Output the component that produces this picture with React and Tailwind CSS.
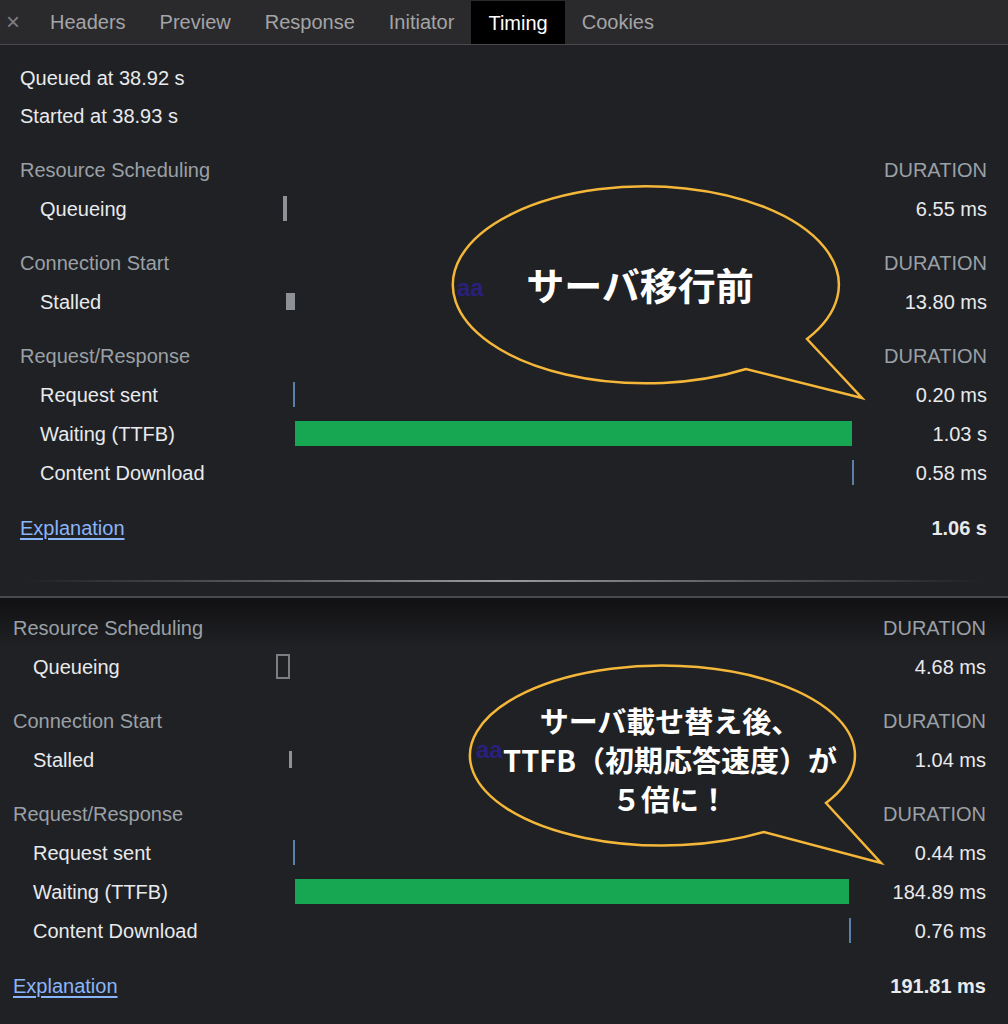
import React from "react";

const GRAY = "#8e9196";
const BLUE = "#5b7fa6";
const GREEN = "#17a652";

const top = [
  {
    title: "Resource Scheduling",
    rows: [{ label: "Queueing", value: "6.55 ms", bar: { left: 0, width: 4, height: 25, color: GRAY } }],
  },
  {
    title: "Connection Start",
    rows: [{ label: "Stalled", value: "13.80 ms", bar: { left: 3, width: 9, height: 17, color: GRAY } }],
  },
  {
    title: "Request/Response",
    rows: [
      { label: "Request sent", value: "0.20 ms", bar: { left: 10, width: 2, height: 25, color: BLUE } },
      { label: "Waiting (TTFB)", value: "1.03 s", bar: { left: 12, width: 557, height: 25, color: GREEN } },
      { label: "Content Download", value: "0.58 ms", bar: { left: 569, width: 2, height: 25, color: BLUE } },
    ],
  },
];

const bottom = [
  {
    title: "Resource Scheduling",
    rows: [{ label: "Queueing", value: "4.68 ms", bar: { left: 0, width: 14, height: 25, outline: "#7a7d82" } }],
  },
  {
    title: "Connection Start",
    rows: [{ label: "Stalled", value: "1.04 ms", bar: { left: 13, width: 3, height: 17, color: GRAY } }],
  },
  {
    title: "Request/Response",
    rows: [
      { label: "Request sent", value: "0.44 ms", bar: { left: 17, width: 2, height: 25, color: BLUE } },
      { label: "Waiting (TTFB)", value: "184.89 ms", bar: { left: 19, width: 554, height: 25, color: GREEN } },
      { label: "Content Download", value: "0.76 ms", bar: { left: 573, width: 2, height: 25, color: BLUE } },
    ],
  },
];

function Bar({ bar }) {
  const style = {
    marginLeft: bar.left,
    width: bar.width,
    height: bar.height,
    background: bar.outline ? "transparent" : bar.color,
    border: bar.outline ? `2px solid ${bar.outline}` : undefined,
  };
  return <div className="shrink-0" style={style} />;
}

function Groups({ groups }) {
  return groups.map((g) => (
    <div key={g.title} className="mt-[15px]">
      <div className="flex h-[39px] items-center">
        <div className="flex-1 text-[#9aa0a6]">{g.title}</div>
        <div className="text-[#9aa0a6]">DURATION</div>
      </div>
      {g.rows.map((r) => (
        <div key={r.label} className="flex h-[39px] items-center">
          <div className="w-[263px] shrink-0 pl-[20px] text-[#e8eaed]">{r.label}</div>
          <div className="flex flex-1 items-center">
            <Bar bar={r.bar} />
          </div>
          <div className="w-[130px] shrink-0 text-right text-[#e8eaed]">{r.value}</div>
        </div>
      ))}
    </div>
  ));
}

function Explanation({ total }) {
  return (
    <div className="mt-[16px] flex h-[39px] items-center">
      <a className="flex-1 text-[#8ab4f8] underline underline-offset-[3px]">Explanation</a>
      <div className="font-bold text-[#e8eaed]">{total}</div>
    </div>
  );
}

export default function App() {
  const tabs = ["Headers", "Preview", "Response", "Initiator", "Timing", "Cookies"];
  return (
    <div
      className="relative h-[1024px] w-[1008px] overflow-hidden bg-[#202124] text-[20px]"
      style={{ fontFamily: '"Liberation Sans", Arial, sans-serif' }}
    >
      {/* tab bar */}
      <div className="flex h-[45px] items-stretch border-b border-[#4a4a4c] bg-[#2a2a2c]">
        <div className="flex w-[33px] items-center pl-[6px] text-[24px] font-light text-[#7d7d80]">×</div>
        {tabs.map((t) => (
          <div
            key={t}
            className={
              t === "Timing"
                ? "mt-[1px] flex items-center bg-black px-[17px] text-white"
                : "flex items-center px-[17px] text-[#a4a4a7]"
            }
          >
            {t}
          </div>
        ))}
      </div>

      {/* top panel */}
      <div className="pl-[20px] pr-[21px] pt-[14px]">
        <div className="flex h-[38px] items-center text-[#e8eaed]">Queued at 38.92 s</div>
        <div className="flex h-[38px] items-center text-[#e8eaed]">Started at 38.93 s</div>
        <Groups groups={top} />
        <Explanation total="1.06 s" />
      </div>
      <div className="mx-[25px] mt-[33px] h-[2px] bg-[linear-gradient(to_right,transparent,#5a5a5e_25%,#9a9a9e_50%,#5a5a5e_75%,transparent)]" />
      <div className="mt-[14px] h-[2px] bg-[#4a4a4e]" />

      {/* bottom panel */}
      <div className="h-[500px] bg-[linear-gradient(to_bottom,#111113,#202124_50px)] pl-[13px] pr-[22px] pt-[10px]">
        <div className="-mt-[15px]">
          <Groups groups={bottom} />
        </div>
        <Explanation total="191.81 ms" />
      </div>

      {/* overlays */}
      <span className="absolute left-[457px] top-[275px] text-[24px] font-bold leading-[26px] text-[#2a1f7d]">aa</span>
      <span className="absolute left-[476px] top-[737px] text-[24px] font-bold leading-[26px] text-[#2a1f7d]">aa</span>

      <svg className="pointer-events-none absolute left-0 top-0" width="1008" height="1024" viewBox="0 0 1008 1024">
        <path
          d="M 746 369 A 193 98.5 0 1 1 807 339 L 862 398 Z"
          fill="none"
          stroke="#f4b73a"
          strokeWidth="2.5"
          strokeLinejoin="miter"
        />
        <path
          d="M 764 832 A 192.5 90 0 1 1 826 803 L 881 863 Z"
          fill="none"
          stroke="#f4b73a"
          strokeWidth="2.5"
          strokeLinejoin="miter"
        />
      </svg>

      <div
        className="absolute left-[640px] top-[284px] -translate-x-1/2 -translate-y-1/2 whitespace-nowrap text-[38px] font-bold leading-none text-white"
        style={{ fontFamily: '"Noto Sans CJK JP", sans-serif' }}
      >
        サーバ移行前
      </div>
      <div
        className="absolute left-[670px] top-[759px] -translate-x-1/2 -translate-y-1/2 whitespace-nowrap text-center text-[29px] font-bold leading-[39px] text-white"
        style={{ fontFamily: '"Noto Sans CJK JP", sans-serif' }}
      >
        <div>サーバ載せ替え後、</div>
        <div>TTFB（初期応答速度）が</div>
        <div>５倍に！</div>
      </div>
    </div>
  );
}
